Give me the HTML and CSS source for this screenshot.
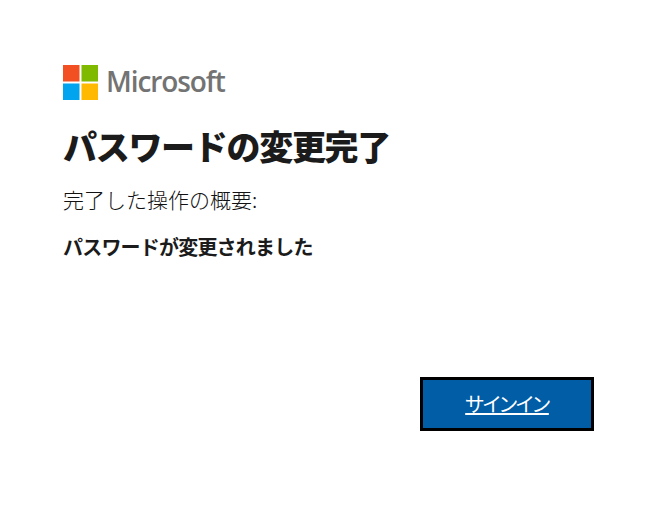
FILE: index.html
```html
<!DOCTYPE html>
<html lang="ja">
<head>
    <meta charset="UTF-8">
    <meta name="viewport" content="width=device-width, initial-scale=1.0">
    <title>パスワードの変更完了</title>
    <link rel="stylesheet" href="styles.css">
</head>
<body>

    <div class="page">
        <div class="logo">
            <svg class="logo-mark" width="35" height="35" viewBox="0 0 35 35" aria-hidden="true">
                <rect x="0" y="0" width="16.5" height="16.5" fill="#f25022"/>
                <rect x="18.5" y="0" width="16.5" height="16.5" fill="#7fba00"/>
                <rect x="0" y="18.5" width="16.5" height="16.5" fill="#00a4ef"/>
                <rect x="18.5" y="18.5" width="16.5" height="16.5" fill="#ffb900"/>
            </svg>
            <span class="logo-text">Microsoft</span>
        </div>

        <h1>パスワードの変更完了</h1>
        <p class="summary">完了した操作の概要:</p>
        <p class="result">パスワードが変更されました</p>

        <div class="actions">
            <a class="button" href="#"><span class="button-label">サインイン</span></a>
        </div>
    </div>

</body>
</html>
```

FILE: styles.css
```css
body {
    font-family: "Noto Sans CJK JP", "Noto Sans", sans-serif;
    margin: 0;
    background-color: white;
    color: #1b1b1b;
}

.page {
    padding: 65px 62px 0 63px;
}

.logo {
    display: flex;
    align-items: center;
    gap: 8px;
    height: 35px;
}

.logo-text {
    font-family: "Open Sans", sans-serif;
    font-size: 28px;
    font-weight: 600;
    letter-spacing: -1.1px;
    color: #737373;
    margin-top: -3px;
}

h1 {
    font-size: 34px;
    line-height: 44px;
    font-weight: 900;
    letter-spacing: -1.3px;
    margin: 24px 0 0;
}

.summary {
    font-size: 21px;
    line-height: 28px;
    font-weight: 300;
    color: #111;
    margin: 17px 0 0;
}

.result {
    font-size: 20px;
    line-height: 28px;
    font-weight: 700;
    letter-spacing: -0.8px;
    margin: 20px 0 0;
}

.actions {
    display: flex;
    justify-content: flex-end;
    margin-top: 116px;
}

.button {
    box-sizing: border-box;
    display: flex;
    align-items: center;
    justify-content: center;
    width: 174px;
    height: 54px;
    padding-bottom: 2px;
    border: 3px solid black;
    background-color: #005da6;
    color: white;
    font-size: 20px;
    text-decoration-thickness: 2px;
}

.button-label {
    font-feature-settings: "palt";
    letter-spacing: -1.2px;
}
```
